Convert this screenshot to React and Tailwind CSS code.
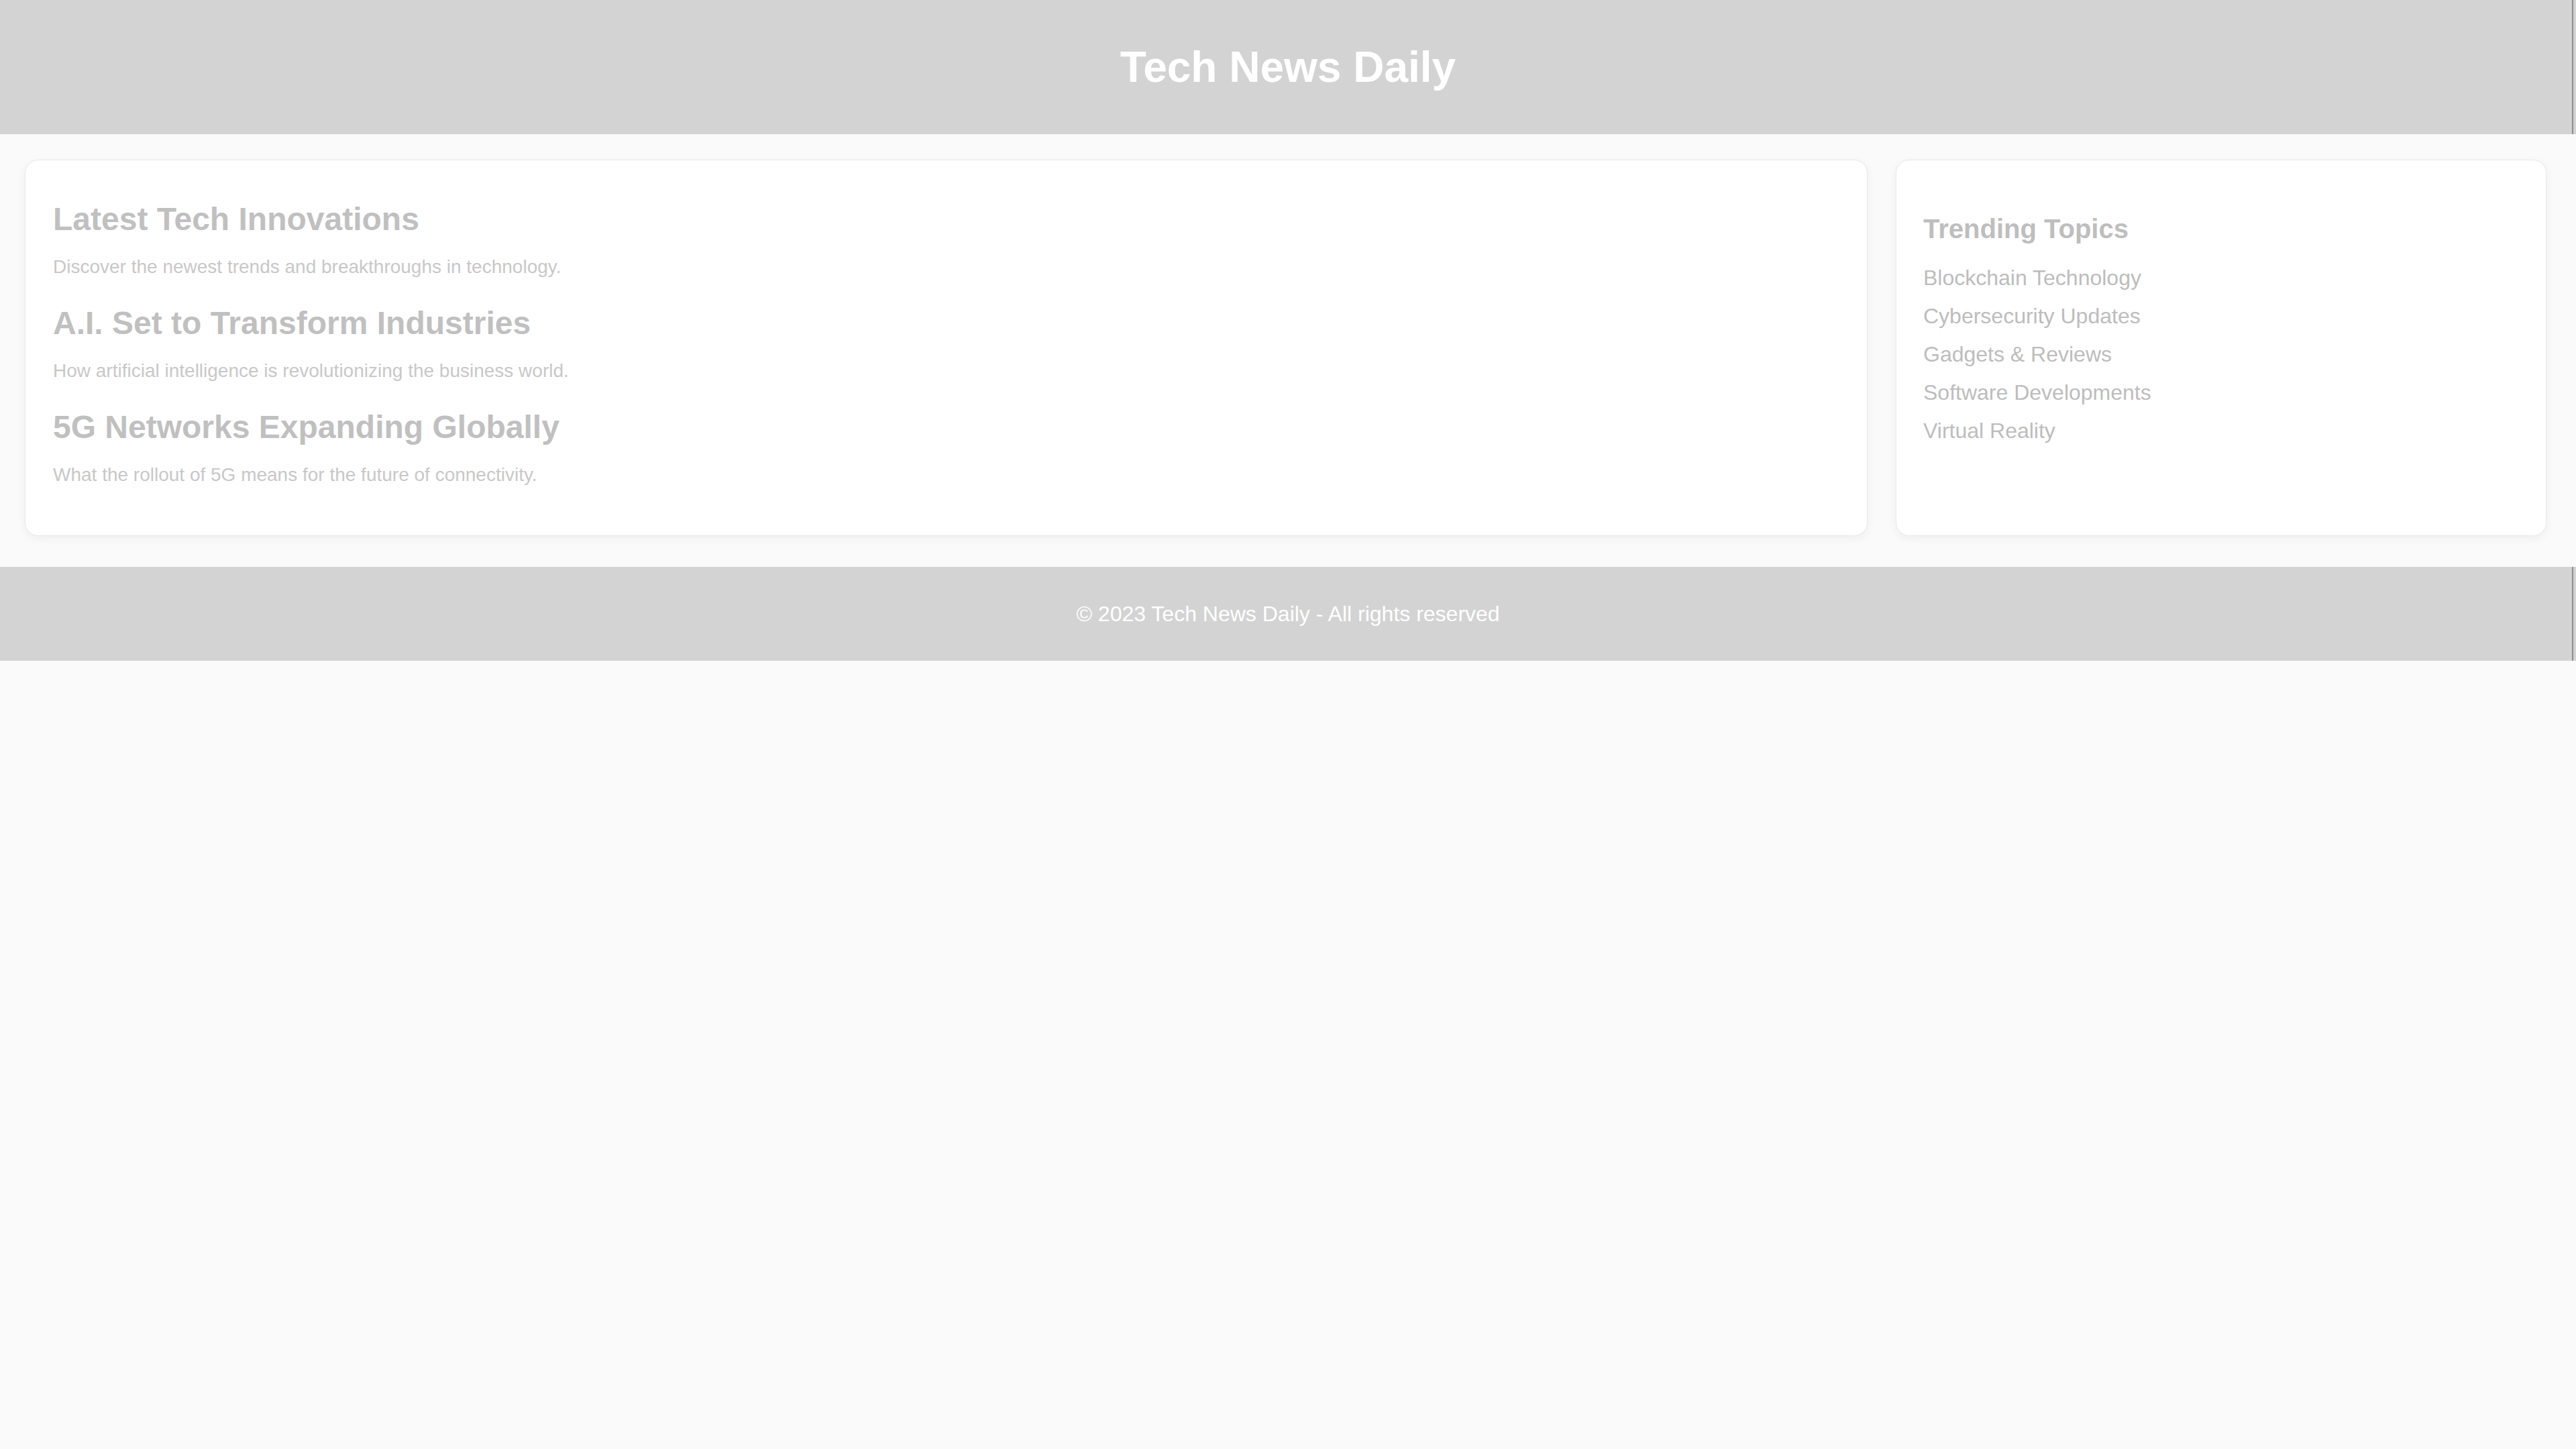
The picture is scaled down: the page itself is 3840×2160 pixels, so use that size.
import React from "react";

const articles = [
	{
		title: "Latest Tech Innovations",
		text: "Discover the newest trends and breakthroughs in technology.",
	},
	{
		title: "A.I. Set to Transform Industries",
		text: "How artificial intelligence is revolutionizing the business world.",
	},
	{
		title: "5G Networks Expanding Globally",
		text: "What the rollout of 5G means for the future of connectivity.",
	},
];

const topics = [
	"Blockchain Technology",
	"Cybersecurity Updates",
	"Gadgets & Reviews",
	"Software Developments",
	"Virtual Reality",
];

const App = () => {
	return (
		<div className="min-h-screen bg-[#fafafa] font-['Liberation_Sans',Arial,sans-serif]">
			<header className="flex h-[200px] items-center justify-center bg-[#d3d3d3] bg-[linear-gradient(to_left,transparent_4px,#8c8c8c_4px,#8c8c8c_6px,transparent_6px)]">
				<h1 className="text-[64px] font-bold leading-[normal] text-white">
					Tech News Daily
				</h1>
			</header>

			<main className="flex gap-[42px] pl-[37px] pr-[44px] pt-[38px] pb-[46px]">
				{/* articles */}
				<section className="flex-[3] rounded-[20px] border border-[#e9e9e9] bg-white pl-[41px] pr-[40px] pt-[40px] pb-[54px] shadow-[0_4px_14px_rgba(0,0,0,0.05)]">
					{articles.map((a) => (
						<article key={a.title} className="py-[20px]">
							<h2 className="mb-[28px] text-[48px] font-bold leading-[normal] text-[#c0c0c0]">
								{a.title}
							</h2>
							<p className="text-[28px] leading-[normal] text-[#c8c8c8]">{a.text}</p>
						</article>
					))}
				</section>

				{/* sidebar */}
				<aside className="flex-1 rounded-[20px] border border-[#e9e9e9] bg-white p-[40px] shadow-[0_4px_14px_rgba(0,0,0,0.05)]">
					<h3 className="mt-[40px] mb-[32px] text-[40px] font-bold leading-[normal] text-[#bebebe]">
						Trending Topics
					</h3>
					<ul>
						{topics.map((t) => (
							<li key={t} className="mb-[20px] text-[32px] leading-[normal] text-[#bdbdbd]">
								{t}
							</li>
						))}
					</ul>
				</aside>
			</main>

			<footer className="flex h-[140px] items-center justify-center bg-[#d3d3d3] bg-[linear-gradient(to_left,transparent_4px,#8c8c8c_4px,#8c8c8c_6px,transparent_6px)]">
				<p className="text-[32px] leading-[normal] text-white">
					© 2023 Tech News Daily - All rights reserved
				</p>
			</footer>
		</div>
	);
};

export default App;
